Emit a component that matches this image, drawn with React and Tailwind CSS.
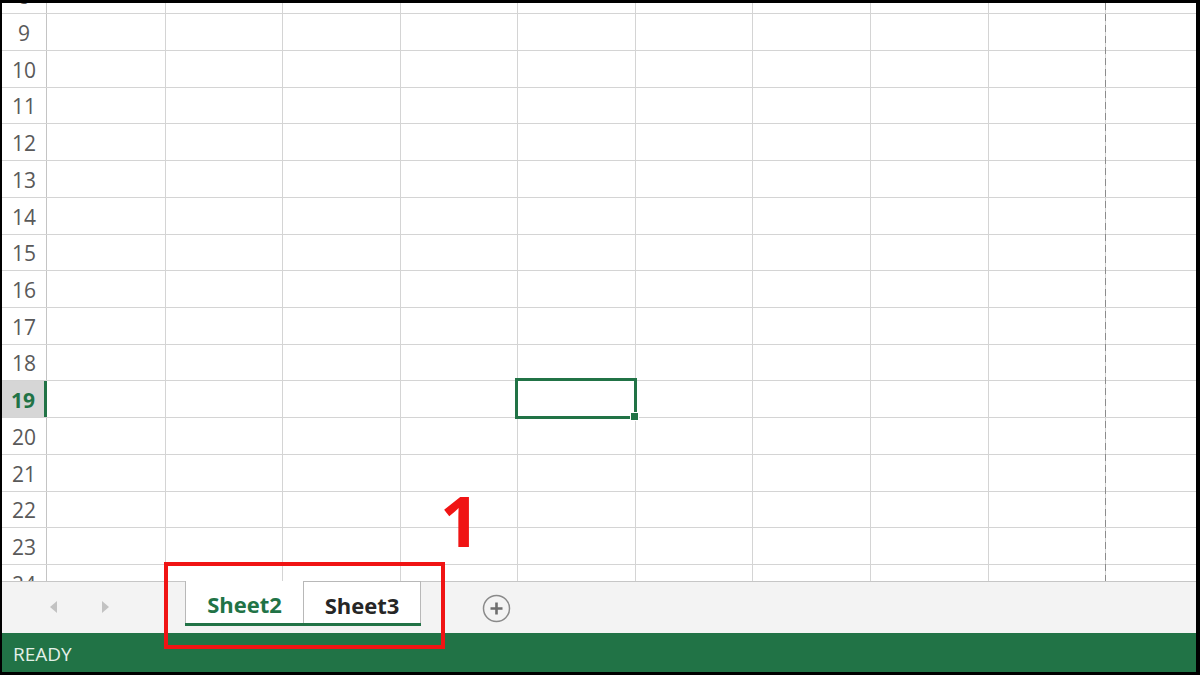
import React from "react";

const rows = [
  { n: 8, h: "h-[37px] -mt-[26px]" },
  { n: 9, h: "h-[37px]" },
  { n: 10, h: "h-[37px]" },
  { n: 11, h: "h-[36px]" },
  { n: 12, h: "h-[37px]" },
  { n: 13, h: "h-[37px]" },
  { n: 14, h: "h-[37px]" },
  { n: 15, h: "h-[36px]" },
  { n: 16, h: "h-[37px]" },
  { n: 17, h: "h-[37px]" },
  { n: 18, h: "h-[36px]" },
  { n: 19, h: "h-[37px]", active: true },
  { n: 20, h: "h-[37px]" },
  { n: 21, h: "h-[37px]" },
  { n: 22, h: "h-[36px]" },
  { n: 23, h: "h-[37px]" },
  { n: 24, h: "h-[37px]" },
];

const cols = ["w-[119px]", "w-[117px]", "w-[118px]", "w-[117px]", "w-[118px]", "w-[117px]", "w-[118px]", "w-[118px]", "w-[117px]"];

function Row({ n, h, active }) {
  return (
    <div className={`flex shrink-0 border-b border-[#d4d4d4] ${h}`}>
      {active ? (
        <div className="w-[45px] shrink-0 flex items-center justify-center pt-[3px] bg-[#d6d6d6] border-r-[3px] border-[#217346] text-[21px] font-bold text-[#217346]">
          {n}
        </div>
      ) : (
        <div className="w-[45px] shrink-0 flex items-center justify-center pt-[3px] border-r border-[#c4c4c4] text-[21px] text-[#595959]">
          {n}
        </div>
      )}
      {cols.map((w, i) => (
        <div key={i} className={`${w} shrink-0 border-r border-[#d4d4d4]`} />
      ))}
      <div className="flex-1" />
    </div>
  );
}

export default function App() {
  return (
    <div className="w-[1200px] h-[675px] bg-black pl-[2px] pt-[3px] pr-[4px] pb-[3px]">
      <div className="relative w-full h-full flex flex-col bg-white font-['Open_Sans',sans-serif] overflow-hidden">
        {/* Grid */}
        <div className="relative h-[578px] shrink-0 flex flex-col overflow-hidden">
          {rows.map((r) => (
            <Row key={r.n} {...r} />
          ))}
          {/* page break */}
          <div className="absolute top-0 bottom-0 left-[1103px] w-px bg-[repeating-linear-gradient(to_bottom,#8c8c8c_0_7px,transparent_7px_11px)]" />
          {/* selected cell */}
          <div className="absolute left-[513px] top-[375px] w-[122px] h-[41px] border-[3px] border-[#217346]" />
          <div className="absolute left-[628px] top-[409px] w-[9px] h-[9px] bg-[#217346] border border-white" />
        </div>

        {/* Sheet tabs */}
        <div className="h-[52px] shrink-0 flex items-start border-t border-[#c6c6c6] bg-[#f3f3f3]">
          <div className="w-[183px] shrink-0 flex items-center h-[50px] pl-[48px] gap-[45px]">
            <div className="w-0 h-0 border-y-[6px] border-y-transparent border-r-[7px] border-r-[#c2c2c2]" />
            <div className="w-0 h-0 border-y-[6px] border-y-transparent border-l-[7px] border-l-[#c2c2c2]" />
          </div>
          <div className="flex flex-col -mt-px">
            <div className="flex">
              <div className="w-[118px] h-[42px] flex items-center justify-center pt-[5px] bg-white border-l border-[#b8b8b8] text-[22px] font-bold text-[#217346]">
                Sheet2
              </div>
              <div className="w-[118px] h-[42px] flex items-center justify-center pt-[5px] bg-white border-l border-r border-t border-[#b8b8b8] text-[22px] font-bold text-[#262626]">
                Sheet3
              </div>
            </div>
            <div className="h-[3px] bg-[#217346]" />
          </div>
          <div className="ml-[61px] mt-[12px]">
            <svg width="29" height="29" viewBox="0 0 29 29">
              <circle cx="14.5" cy="14.5" r="13" fill="none" stroke="#8a8a8a" strokeWidth="1.5" />
              <path d="M8.5 14.5h12M14.5 8.5v12" stroke="#6e6e6e" strokeWidth="2.6" />
            </svg>
          </div>
        </div>

        {/* Status bar */}
        <div className="h-[39px] shrink-0 flex items-center bg-[#217346] pl-[11px] pt-[3px] text-[19px] text-[#e4f0e8]">
          READY
        </div>

        {/* annotation */}
        <div className="absolute left-[162px] top-[559px] w-[281px] h-[87px] border-[4px] border-[#f01414]" />
        <div className="absolute left-[438px] top-[482px] text-[70px] leading-none font-bold text-[#f01414]">1</div>
      </div>
    </div>
  );
}
